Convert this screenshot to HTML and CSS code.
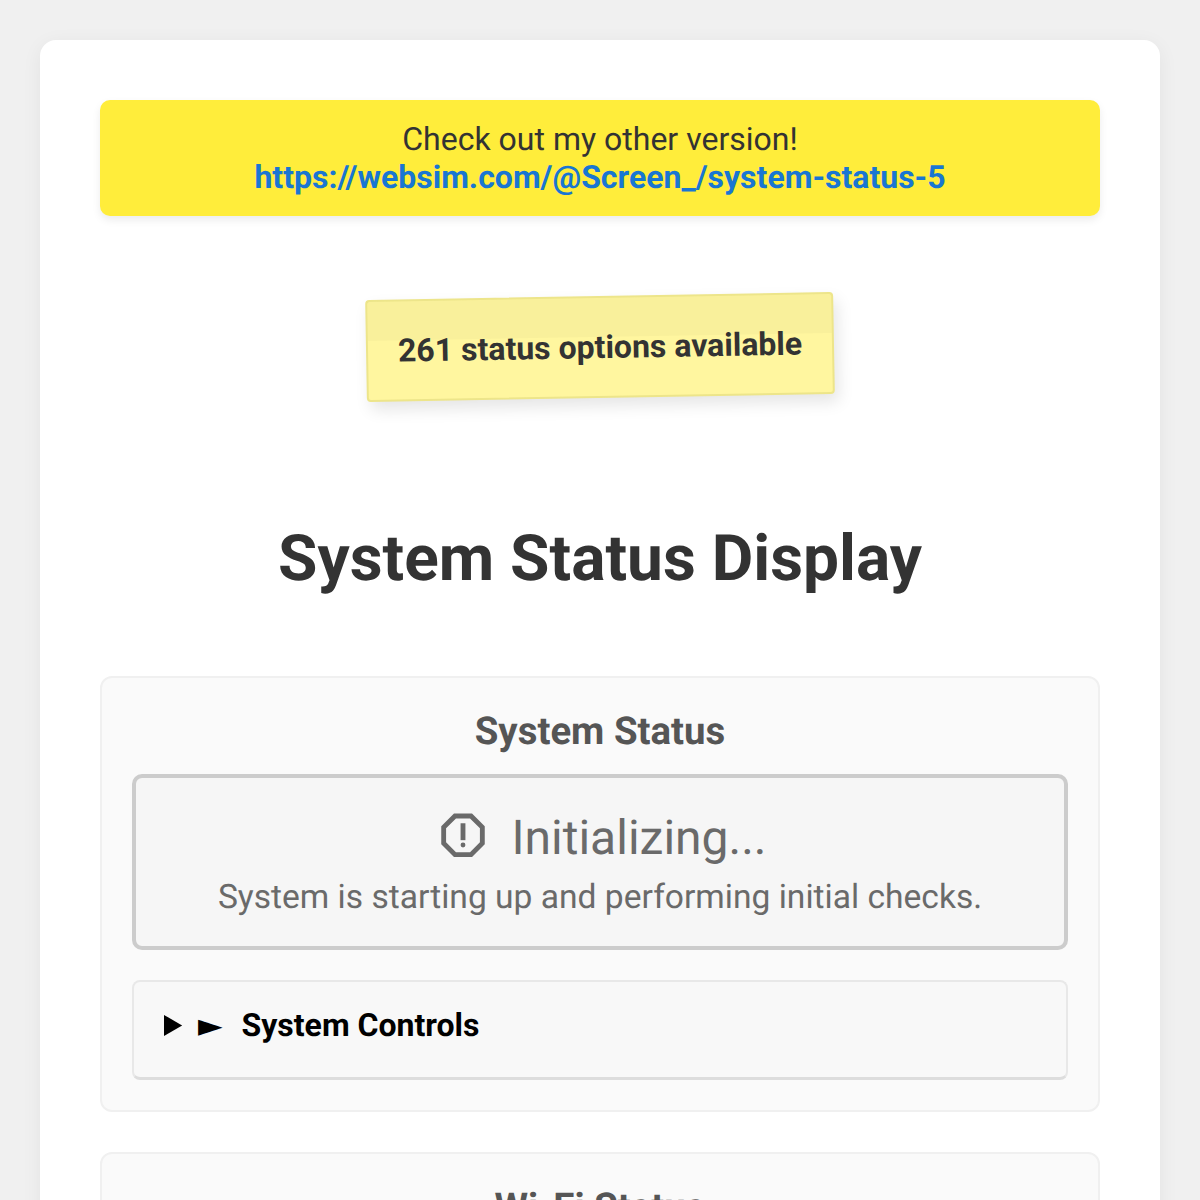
FILE: index.html
```html
<!DOCTYPE html>
<html lang="en">
<head>
<meta charset="utf-8">
<title>System Status Display</title>
<link rel="stylesheet" href="styles.css">
</head>
<body>
<main class="container">
  <div class="banner">Check out my other version!<br><a class="banner-link" href="#">https://websim.com/@Screen_/system-status-5</a></div>
  <div class="note-wrap"><div class="note">261 status options available</div></div>
  <h1 class="title">System Status Display</h1>
  <section class="panel">
    <h2 class="panel-title">System Status</h2>
    <div class="status">
      <div class="status-head">
        <svg class="status-icon" viewBox="0 1.1 24 24" aria-hidden="true"><path d="M15.73 3H8.27L3 8.27v7.46L8.27 21h7.46L21 15.73V8.27L15.73 3zM19 14.9L14.9 19H9.1L5 14.9V9.1L9.1 5h5.8L19 9.1v5.8z"/><circle cx="12" cy="16" r="1"/><rect x="11" y="7" width="2" height="7"/></svg>
        <span class="status-name">Initializing...</span>
      </div>
      <p class="status-desc">System is starting up and performing initial checks.</p>
    </div>
    <details class="controls">
      <summary class="controls-summary"><span class="controls-glyph">►</span>System Controls</summary>
    </details>
  </section>
  <section class="panel">
    <h2 class="panel-title">Wi-Fi Status</h2>
  </section>
</main>
</body>
</html>
```
FILE: styles.css
```css
* { box-sizing: border-box; }
html, body { margin: 0; }
body {
  background: #f0f0f0;
  padding: 40px;
  font-family: Roboto, sans-serif;
  color: #333;
  height: 1200px;
  overflow: hidden;
  text-rendering: geometricPrecision;
}
.container {
  background: #fff;
  border-radius: 16px;
  padding: 60px;
  box-shadow: 0 4px 20px rgba(0,0,0,0.06);
}
.banner {
  background: #ffed3b;
  border-radius: 10px;
  padding: 20px;
  text-align: center;
  font-size: 32px;
  line-height: 38px;
  box-shadow: 0 4px 8px rgba(0,0,0,0.08);
}
.banner-link { color: #1976d2; font-weight: 700; text-decoration: none; }
.note-wrap { display: flex; justify-content: center; margin-top: 80px; }
.note {
  background: #fff69f;
  border: 2px solid #ede58a;
  border-radius: 4px;
  padding: 30px;
  font-size: 32px;
  font-weight: 700;
  line-height: 38px;
  transform: rotate(-1deg);
  box-shadow: 4px 8px 16px rgba(0,0,0,0.1);
  position: relative;
}
.note::before {
  content: "";
  position: absolute;
  left: 0; right: 0; top: 0;
  height: 39px;
  background: rgba(0,0,0,0.025);
}
.title {
  margin: 123px 0 0;
  text-align: center;
  font-size: 64px;
  line-height: 75px;
  font-weight: 700;
}
.panel {
  margin-top: 80px;
  background: #fafafa;
  border: 2px solid #f0f0f0;
  border-radius: 12px;
  padding: 31px 30px 30px;
}
.panel + .panel { margin-top: 40px; }
.panel-title {
  margin: 0 0 20px;
  text-align: center;
  font-size: 38.4px;
  line-height: 45px;
  font-weight: 700;
  color: #555;
}
.status {
  background: #f6f6f6;
  border: 4px solid #ccc;
  border-radius: 10px;
  padding: 31px 20px 29px;
  text-align: center;
  color: #6a6a6a;
}
.status-head { display: flex; justify-content: center; align-items: center; gap: 20px; }
.status-icon { width: 58px; height: 58px; fill: #6a6a6a; }
.status-name { font-size: 48px; line-height: 56px; }
.status-desc { margin: 11px 0 0; font-size: 33.6px; line-height: 39px; }
.controls {
  margin-top: 30px;
  background: #f8f8f8;
  border: 2px solid #e8e8e8;
  border-bottom: 3px solid #ddd;
  border-radius: 8px;
  padding: 20px 30px 29px;
}
.controls-summary { font-size: 32px; line-height: 46px; font-weight: 700; color: #000; }
.controls-glyph { margin-right: 19px; font-family: "DejaVu Sans", sans-serif; }
```
